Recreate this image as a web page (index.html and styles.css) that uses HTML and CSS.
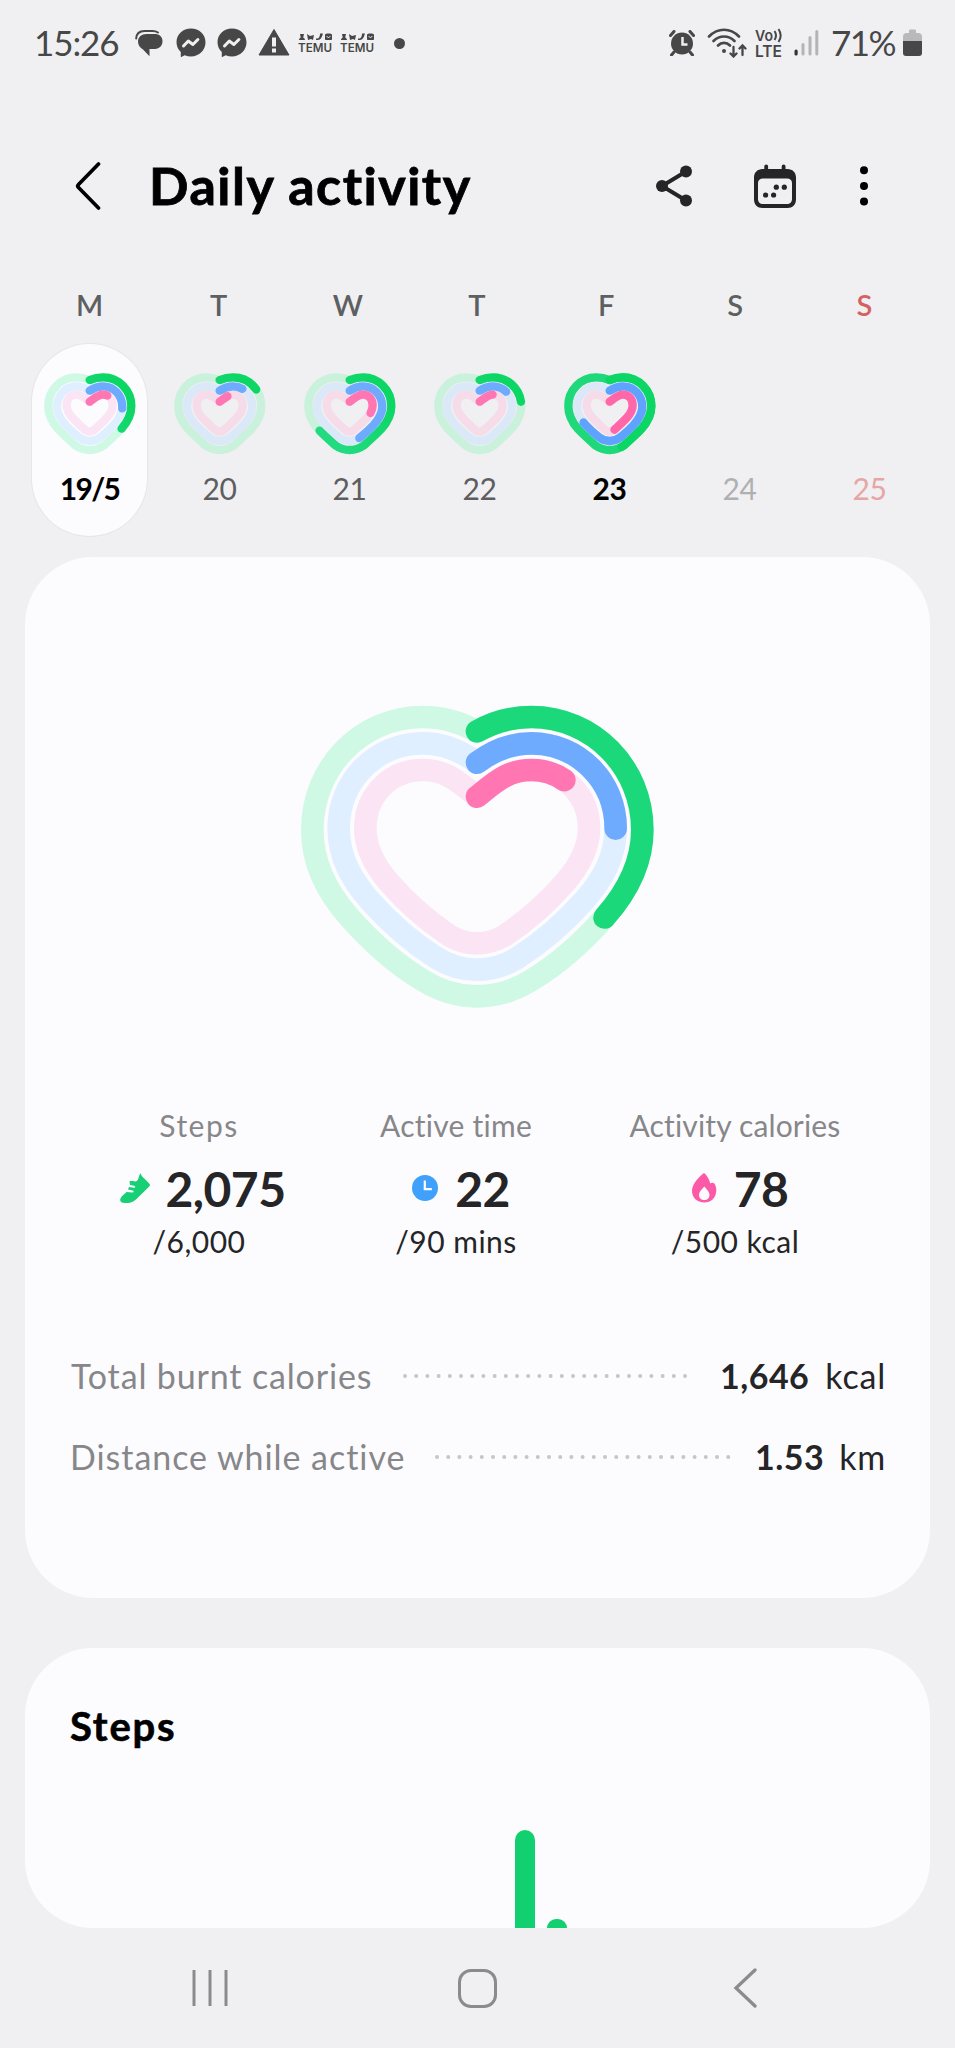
FILE: index.html
```html
<!DOCTYPE html>
<html lang="en">
<head>
<meta charset="utf-8">
<title>Daily activity</title>
<link rel="stylesheet" href="styles.css">
</head>
<body>
<svg class="defs" width="0" height="0" aria-hidden="true">
  <defs>
    <linearGradient id="g-green" gradientUnits="userSpaceOnUse" x1="190" y1="0" x2="40" y2="120"><stop offset="0" stop-color="#0cd664"/><stop offset="1" stop-color="#22da80"/></linearGradient>
    <!-- small heart rings -->
    <path id="s-out" pathLength="100" d="M140,27C155,21 165,19 180,19C228,19 265,58 265,105C265,135 252,155 235,174C218,192 200,208 183,223C170,232 156,237 140,237C124,237 110,232 97,223C80,208 62,192 45,174C28,155 16,135 16,105C16,58 52,19 100,19C115,19 125,21 140,27"/>
    <path id="s-mid" pathLength="100" d="M140,59C152,51 165,46 180,46C213,46 238,73 238,107C238,130 226,146 212,162C200,175 187,187 172,199C162,207 152,210 140,210C128,210 118,207 108,199C93,187 80,175 68,162C54,146 42,130 42,107C42,73 67,46 100,46C115,46 128,51 140,59"/>
    <path id="s-in" pathLength="100" d="M140,92C152,84 165,71 180,71C198,71 209,85 209,103C209,118 202,129 192,140C181,152 170,162 160,171C154,177 148,182 140,182C132,182 126,177 120,171C110,162 99,152 88,140C78,129 71,118 71,103C71,85 82,71 100,71C115,71 128,84 140,92"/>
    <symbol id="s-track" viewBox="0 0 280 252"><use href="#s-out" class="t-green"/><use href="#s-mid" class="t-blue"/><use href="#s-in" class="t-pink"/></symbol>
    <!-- large heart rings -->
    <path id="l-out" pathLength="100" d="M592,154C640,127 695,111 755,111C940,111 1088,262 1088,450C1088,560 1030,650 975,712C915,780 840,850 756,900C705,932 650,949 592,949C534,949 479,932 428,900C344,850 269,780 209,712C154,650 98,560 98,450C98,262 244,111 429,111C489,111 544,127 592,154"/>
    <path id="l-mid" pathLength="100" d="M592,248C640,212 692,190 755,190C895,190 1008,303 1008,445C1008,535 965,602 916,659C860,722 790,785 716,832C680,855 635,869 592,869C549,869 504,855 468,832C394,785 324,722 268,659C219,602 177,535 177,445C177,303 289,190 429,190C492,190 544,212 592,248"/>
    <path id="l-in" pathLength="100" d="M592,350C640,312 680,270 755,270C853,270 928,347 928,445C928,500 900,556 857,606C800,672 740,723 676,766C650,782 620,790 592,790C564,790 534,782 508,766C444,723 384,672 327,606C284,556 257,500 257,445C257,347 331,270 429,270C504,270 544,312 592,350"/>
    <symbol id="messenger" viewBox="0 0 30 30"><path fill="#474747" d="M15 .5C6.700 .5.500 6.500.500 14.200c0 4 1.700 7.300 4.300 9.700v5.400l3.900-2c2 .8 4.100 1.200 6.300 1.200 8.300 0 14.500-6.200 14.500-14.200S23.300.5 15 .5z"/><path fill="none" stroke="#f0f0f3" stroke-width="3" stroke-linejoin="round" stroke-linecap="round" d="M7.500 18l4.800-5 4.600 3.500 5-5"/></symbol>
    <symbol id="temu" viewBox="0 0 34 20"><g fill="#474747"><path d="M1 7c0-1.500 1-2 1.700-2.500L2 1h4l-.8 3.500C6 5 7 5.500 7 7zM9 1l3 2 4-1-1 5-2-1-3 1zM18 5.500c3 .5 4-2 4-5h3l-1 3c-1 3-3 3.500-6 3.500zM27 2c0-1 1-1.500 3.500-1.500S34 1 34 2v4c0 .7-.4 1-1 1h-5c-.6 0-1-.3-1-1z"/><text x="0" y="18.700" textLength="34" lengthAdjust="spacingAndGlyphs" font-size="12" font-weight="600" font-family="Inter, sans-serif">TEMU</text></g><path d="M29 3c0 2 3 2 3 0" fill="none" stroke="#f0f0f3"/></symbol>
  </defs>
</svg>

<div class="screen">
  <div class="status">
    <span class="clock">15:26</span>
    <svg class="st chat" viewBox="0 0 28 28"><path fill="#474747" d="M11.500 5h8c5 0 8 2.700 8 7.200s-3 7.300-7.500 7.800H14.500v7.200L8 20.500C5 19 3 16 3 12.500 3 8 6.500 5 11.500 5z"/><path fill="none" stroke="#474747" stroke-width="2" stroke-linecap="round" d="M1.200 9.500C1.500 4.500 5 2 9.500 2h8c2.200 0 4 .5 5.500 1.500"/></svg>
    <svg class="st msg"><use href="#messenger"/></svg>
    <svg class="st msg2"><use href="#messenger"/></svg>
    <svg class="st warn" viewBox="0 0 32 28"><path fill="#474747" d="M16 1.500L31 27H1z" stroke="#474747" stroke-linejoin="round"/><path stroke="#f0f0f3" stroke-width="4" d="M16 9.500v9M16 20.500v4"/></svg>
    <svg class="st temu"><use href="#temu"/></svg>
    <svg class="st temu2"><use href="#temu"/></svg>
    <span class="more-dot"></span>
    <svg class="st alarm" viewBox="0 0 26 26"><circle cx="13" cy="13.500" r="11" fill="#474747"/><path stroke="#474747" stroke-width="3" stroke-linecap="round" d="M1.500 5.500l3.500-4M24.500 5.500l-3.500-4M5 22l-2.500 3M21 22l2.500 3"/><path d="M13.500 7v7.500h5" fill="none" stroke="#f0f0f3" stroke-width="2.500"/></svg>
    <svg class="st wifi" viewBox="0 0 40 30"><g fill="none" stroke="#474747" stroke-width="2.700" stroke-linecap="round"><path d="M2 8.500C11-.5 23-.5 32 8.500M6.500 13c6-6 15-6 21 0M11 17.500c3.500-3.500 8.500-3.500 12 0"/><path stroke-width="2.300" d="M26.500 19v9M23.500 25.500l3 3 3-3M35.500 27v-9.500M32.500 20.500l3-3 3 3"/></g><circle cx="17" cy="23" r="2" fill="#474747"/></svg>
    <svg class="st volte" viewBox="0 0 30 34"><g fill="#474747" font-weight="600" font-family="Inter, sans-serif"><text x="1" y="15" font-size="15" textLength="18" lengthAdjust="spacingAndGlyphs">Vo</text><text x="1" y="30.500" font-size="16" textLength="27" lengthAdjust="spacingAndGlyphs">LTE</text></g><path fill="none" stroke="#474747" stroke-width="2" d="M20.500 5c2 3 2 6 0 9M24.500 3c3 4.500 3 8.500 0 13"/></svg>
    <svg class="st signal" viewBox="0 0 25 26"><g fill="#b4b4b6"><rect x="7.500" y="13" width="3" height="12.500" rx="1.500"/><rect x="14.500" y="6" width="3" height="19.500" rx="1.500"/><rect x="21.300" y="0" width="3" height="25.500" rx="1.500"/></g><rect x=".5" y="19.500" width="3.200" height="6" rx="1.500" fill="#333"/></svg>
    <span class="percent">71%</span>
    <svg class="st battery" viewBox="0 0 19 28"><path fill="#b9b9bb" d="M6 2c0-1 .5-1.500 1.500-1.500h4c1 0 1.500.5 1.500 1.500v2h2.500c2 0 3.500 1.500 3.500 3.500V12H0V7.500C0 5.500 1.500 4 3.500 4H6z"/><path fill="#474747" d="M0 12h19v12c0 2-1 3-3 3H3c-2 0-3-1-3-3z"/></svg>
  </div>

  <header class="header">
    <svg class="back" viewBox="0 0 26 48"><path d="M23.500 2L3.500 22.500q-1.500 1.500 0 3L23.500 46" fill="none" stroke="#000" stroke-width="3.700" stroke-linecap="round"/></svg>
    <h1>Daily activity</h1>
    <svg class="share" viewBox="0 0 38 42"><path d="M31 6.500L7 21l24 14.500" fill="none" stroke="#252527" stroke-width="4"/><g fill="#252527"><circle cx="31" cy="6.500" r="6"/><circle cx="7" cy="21" r="6"/><circle cx="31" cy="35.500" r="6"/></g></svg>
    <svg class="calendar" viewBox="0 0 42 45"><path fill="#252527" fill-rule="evenodd" d="M8.500 5h25C38.500 5 42 8.500 42 13.500v22c0 5-3.500 8.500-8.500 8.500h-25C3.500 44 0 40.500 0 35.500v-22C0 8.500 3.500 5 8.500 5zM9 14.500c-3 0-5 1.500-5 4.500v16c0 3 2 5 5 5h24c3 0 5-2 5-5V19c0-3-2-4.500-5-4.500z"/><path stroke="#252527" stroke-width="3.800" stroke-linecap="round" d="M12.200 2.300V8M29.600 2.300V8"/><g fill="#252527"><circle cx="22.300" cy="23.200" r="2.600"/><circle cx="30.300" cy="23.200" r="2.600"/><circle cx="11.600" cy="31" r="2.600"/><circle cx="19.600" cy="31" r="2.600"/></g></svg>
    <svg class="kebab" viewBox="0 0 8 40"><circle cx="4" cy="4.200" r="4"/><circle cx="4" cy="20" r="4"/><circle cx="4" cy="35.600" r="4"/></svg>
  </header>

  <div class="weekdays"><span>M</span><span>T</span><span>W</span><span>T</span><span>F</span><span>S</span><span class="sun">S</span></div>

  <div class="days">
    <div class="day selected">
      <svg class="mini" viewBox="0 0 280 252"><use href="#s-track"/><use href="#s-out" class="p-green" stroke-dasharray="34 200"/><use href="#s-mid" class="p-blue" stroke-dasharray="24.500 200"/><use href="#s-in" class="p-pink" stroke-dasharray="14.500 200"/></svg>
      <b>19/5</b>
    </div>
    <div class="day">
      <svg class="mini dim" viewBox="0 0 280 252"><use href="#s-track"/><use href="#s-out" class="p-green" stroke-dasharray="16.600 200"/><use href="#s-mid" class="p-blue" stroke-dasharray="12.500 200"/><use href="#s-in" class="p-pink" stroke-dasharray="7 200"/></svg>
      <span>20</span>
    </div>
    <div class="day">
      <svg class="mini dim" viewBox="0 0 280 252"><use href="#s-track"/><use href="#s-out" class="p-green" stroke-dasharray="65 200"/><use href="#s-mid" class="p-blue" stroke-dasharray="44.500 200"/><use href="#s-in" class="p-pink" stroke-dasharray="29 200"/></svg>
      <span>21</span>
    </div>
    <div class="day">
      <svg class="mini dim" viewBox="0 0 280 252"><use href="#s-track"/><use href="#s-out" class="p-green" stroke-dasharray="22 200"/><use href="#s-mid" class="p-blue" stroke-dasharray="15 200"/><use href="#s-in" class="p-pink" stroke-dasharray="11 200"/></svg>
      <span>22</span>
    </div>
    <div class="day">
      <svg class="mini dim" viewBox="0 0 280 252"><use href="#s-track"/><use href="#s-out" class="p-green-end" stroke-dasharray="100 200"/><use href="#s-out" class="p-green-start" stroke-dasharray="45 200"/><use href="#s-mid" class="p-blue strong" stroke-dasharray="67 200"/><use href="#s-in" class="p-pink strong" stroke-dasharray="46 200"/></svg>
      <b class="today">23</b>
    </div>
    <div class="day"><span class="future">24</span></div>
    <div class="day"><span class="future-sun">25</span></div>
  </div>

  <section class="card summary">
    <svg class="heart" viewBox="40 60 1104 942"><use href="#l-out" class="t-green"/><use href="#l-mid" class="t-blue"/><use href="#l-in" class="t-pink"/><use href="#l-out" class="p-green-l" stroke-dasharray="34.100 200"/><use href="#l-mid" class="p-blue" stroke-dasharray="23.800 200"/><use href="#l-in" class="p-pink" stroke-dasharray="15 200"/></svg>

    <div class="stats">
      <div class="stat">
        <div class="label l1">Steps</div>
        <div class="value"><svg class="ic-shoe" viewBox="0 0 30 30"><path fill="#17cf74" d="M20 .5c1 0 1.200 1.500 2 2.800l7.200 7.200c1 1 1 2 0 3L16 26.500C13 29.500 9 30 5 30c-4 0-5.500-2-4.500-4.500C1.500 23 4 21.500 6.500 19l6 .5c1.500 0 1.500-2 0-2L8 16.500l1-2.500 5 .7c1.500.2 1.700-1.800.2-2L10 12l-.500-4h3.500C16 9 18 8 18.500 5z"/></svg><span>2,075</span></div>
        <div class="goal">/6,000</div>
      </div>
      <div class="stat">
        <div class="label l2">Active time</div>
        <div class="value short"><svg class="ic-clock" viewBox="0 0 26 26"><circle cx="13" cy="13" r="13" fill="#3fa1fb"/><path d="M12.800 5.500v8.700h7" fill="none" stroke="#fff" stroke-width="2.200"/></svg><span>22</span></div>
        <div class="goal">/90 mins</div>
      </div>
      <div class="stat">
        <div class="label l3">Activity calories</div>
        <div class="value short"><svg class="ic-flame" viewBox="0 0 25 30"><path fill="#fc59a6" fill-rule="evenodd" d="M11 .8c.8-.7 1.700-.5 2.300.2 2.200 2.500 4 5.800 5 9.500 1.500-1.500 4-1 4.700 1 1 2.500 1.500 4.500 1.300 6.500C23.800 25 19 29.500 12.300 29.500 5 29.500 0 24.500 0 18 0 11.500 5.500 5.500 11 .8zM12.300 13.500C9 17 7 19 7 22c0 3 2.300 5 5.300 5s5.200-2 5.200-5-2-5-5.200-8.500z"/></svg><span>78</span></div>
        <div class="goal">/500 kcal</div>
      </div>
    </div>

    <div class="line"><span class="name n1">Total burnt calories</span><svg class="dots d1"><line x1="2" y1="3" x2="284" y2="3"/></svg><b class="v1">1,646</b><span class="unit u1">kcal</span></div>
    <div class="line"><span class="name n2">Distance while active</span><svg class="dots d2"><line x1="2" y1="3" x2="294" y2="3"/></svg><b class="v2">1.53</b><span class="unit u2">km</span></div>
  </section>

  <section class="card steps">
    <h2>Steps</h2>
    <div class="chart"><span class="bar tall"></span><span class="bar low"></span></div>
  </section>

  <nav class="nav">
    <svg class="recents" viewBox="0 0 36 38"><path d="M2 1v36M18 1v36M34 1v36" stroke="#8b8b8d" stroke-width="3"/></svg>
    <span class="home"></span>
    <svg class="navback" viewBox="0 0 24 40"><path d="M22 2L3 20l19 18" fill="none" stroke="#8b8b8d" stroke-width="3.300" stroke-linecap="round"/></svg>
  </nav>
</div>
</body>
</html>
```

FILE: styles.css
```css
* { box-sizing: border-box; }
body { margin: 0; background: #f0f0f3; font-family: Lato, "Open Sans", sans-serif; font-variant-ligatures: none; color: #252527; }
svg { display: block; flex: none; }
.defs { position: absolute; }
.screen { width: 955px; height: 2048px; overflow: hidden; display: flex; flex-direction: column; }

.status { height: 86px; display: flex; align-items: center; padding: 0 0 0 34px; color: #474747; font-size: 35px; white-space: nowrap; }
.clock, .percent { line-height: 44px; margin-bottom: 3px; }
.clock { width: 101px; letter-spacing: -1.100px; }
.chat { width: 28px; height: 28px; }
.msg { width: 30px; height: 30px; margin-left: 13px; }
.msg2 { width: 30px; height: 30px; margin-left: 11px; }
.warn { width: 32px; height: 28px; margin: 0 0 2px 11px; }
.temu { width: 34px; height: 20px; margin-left: 8px; }
.temu2 { width: 34px; height: 20px; margin-left: 8px; }
.more-dot { width: 11px; height: 11px; border-radius: 50%; background: #474747; margin-left: 20px; }
.alarm { width: 26px; height: 26px; margin-left: 264px; }
.wifi { width: 40px; height: 30px; margin-left: 12px; }
.volte { width: 30px; height: 34px; margin-left: 7px; }
.signal { width: 25px; height: 26px; margin-left: 10px; }
.percent { width: 72px; margin-left: 12px; letter-spacing: -1.500px; }
.battery { width: 19px; height: 28px; }

.header { height: 200px; display: flex; align-items: center; padding-left: 75px; }
.back { width: 26px; height: 48px; }
h1 { margin: 0 0 2px 48px; width: 506px; font-size: 52px; line-height: 60px; font-weight: 700; letter-spacing: 1.500px; color: #000; -webkit-text-stroke: 0.800px #000; white-space: nowrap; }
.share { width: 38px; height: 42px; }
.calendar { width: 42px; height: 45px; margin-left: 61px; }
.kebab { width: 8px; height: 40px; margin-left: 64px; }

.weekdays { height: 40px; width: 904px; margin-left: 25px; display: grid; grid-template-columns: repeat(7, 1fr); text-align: center; font-size: 29px; line-height: 37px; font-weight: 600; color: #5e5f61; }
.weekdays .sun { color: #d4635f; }

.days { height: 231px; padding: 18px 0 0 32px; display: flex; gap: 15px; }
.day { width: 115px; height: 192px; display: flex; flex-direction: column; align-items: center; justify-content: flex-end; padding-bottom: 30px; font-size: 30px; line-height: 36px; letter-spacing: -0.500px; color: #5e5e60; }
.day.selected { background: #fcfcff; border-radius: 58px; box-shadow: 0 0 0 1px #e6e6e9; }
.day b { font-weight: 700; color: #000; letter-spacing: -1.700px; }
.day b.today { letter-spacing: -0.500px; }
.day .future { color: #b0b0b2; }
.day .future-sun { color: #e7a6a6; }
.mini { width: 93.300px; height: 84px; margin-bottom: 15px; }
.mini use { fill: none; stroke-width: 25px; stroke-linecap: round; }

.t-green, .t-blue, .t-pink, .p-green, .p-green-l, .p-green-start, .p-green-end, .p-blue, .p-pink { fill: none; }
.t-green { stroke: var(--track-green, #cff9e5); }
.t-blue { stroke: var(--track-blue, #e0efff); }
.t-pink { stroke: var(--track-pink, #fbe5f4); }
.dim { --track-green: #c9f1dc; --track-blue: #dbe8f7; --track-pink: #f6dce9; }
.p-green { stroke: url(#g-green); }
.p-green-l { stroke: #1bd97a; }
.p-green-start { stroke: #0cd664; }
.p-green-end { stroke: #1ed87a; }
.p-blue { stroke: #6eabff; }
.p-pink { stroke: #ff76b2; }
.strong.p-blue { stroke: #5fa2ff; }
.strong.p-pink { stroke: #ff67a8; }

.card { width: 905px; margin-left: 25px; flex: none; background: #fcfcff; border-radius: 68px; }
.summary { height: 1040.500px; padding-top: 143px; }
.heart { width: 368px; height: 314px; margin-left: 268px; }
.heart use { stroke-width: 68px; stroke-linecap: round; }

.stats { margin-top: 88px; padding-left: 45px; display: grid; grid-template-columns: 258px 256px 302px; text-align: center; height: 233px; }
.label { font-size: 30px; line-height: 46px; color: #87878a; }
.l1 { letter-spacing: 1.500px; }
.l2 { letter-spacing: 0.250px; }
.l3 { letter-spacing: 0.150px; }
.value { display: flex; align-items: center; justify-content: center; height: 80px; padding-left: 8px; font-size: 48px; font-weight: 700; letter-spacing: -0.500px; }
.value svg { margin-right: 15px; }
.value.short { padding-left: 10px; }
.value.short svg { margin-right: 17px; }
.ic-shoe { width: 30px; height: 30px; }
.ic-clock { width: 26px; height: 26px; }
.ic-flame { width: 25px; height: 30px; }
.goal { font-size: 30px; line-height: 26px; letter-spacing: 0.500px; }

.line { display: flex; align-items: center; height: 81px; padding: 0 44px 0 46px; font-size: 34px; white-space: nowrap; }
.name { color: #87878a; width: 299px; letter-spacing: 0.850px; }
.n2 { width: 331px; margin-left: -1px; letter-spacing: 0.950px; }
.dots { height: 6px; }
.dots line { stroke: #c6c6ca; stroke-width: 4; stroke-linecap: round; stroke-dasharray: 0 11.200; }
.d1 { width: 288px; margin-left: 33px; }
.d2 { width: 296px; margin-left: 34px; }
.line b { margin-left: auto; font-weight: 700; letter-spacing: 0.500px; }
.unit { margin-left: 15px; letter-spacing: 0.800px; }
.v1 { margin-right: 1px; }

.steps { height: 280.500px; margin-top: 50px; padding: 53px 0 0 45px; }
h2 { margin: 0; font-size: 40px; line-height: 50px; font-weight: 700; letter-spacing: 1.800px; color: #000; -webkit-text-stroke: 0.600px #000; }
.chart { height: 98px; margin-top: 79.500px; padding-left: 445px; display: flex; gap: 12px; align-items: flex-end; overflow: hidden; }
.bar { width: 20px; background: #12d070; border-radius: 10px 10px 0 0; }
.tall { height: 98px; }
.low { height: 9px; }

.nav { height: 120px; display: flex; align-items: center; padding-left: 192px; }
.recents { width: 36px; height: 38px; }
.home { width: 39px; height: 39px; border: 3.500px solid #8b8b8d; border-radius: 13px; margin-left: 230px; }
.navback { width: 24px; height: 40px; margin-left: 236px; }
```
